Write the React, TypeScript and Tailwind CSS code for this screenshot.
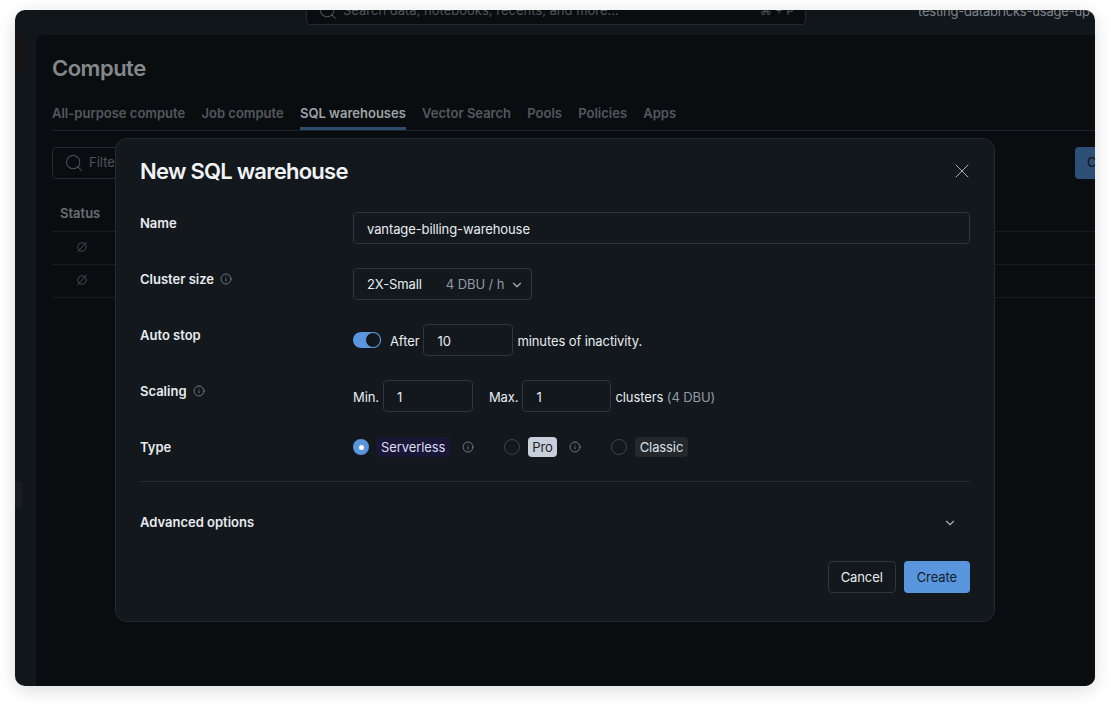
import { ChevronDown, Info, Search, X } from "lucide-react";

const tabs = ["All-purpose compute", "Job compute", "SQL warehouses", "Vector Search", "Pools", "Policies", "Apps"];

function StoppedIcon() {
  return (
    <svg width="12" height="12" viewBox="0 0 12 12" fill="none" stroke="#454a50" strokeWidth="1">
      <circle cx="6" cy="6" r="4.2" />
      <path d="M10.6 .8 1.4 11.2" />
    </svg>
  );
}

function Hint() {
  return <Info size={12} strokeWidth={1.5} className="text-[#8592a0]" />;
}

function Field({ value, width }: { value: string; width: string }) {
  return (
    <input
      readOnly
      value={value}
      className={`h-8 ${width} rounded border border-[#2c3540] bg-transparent px-[13px] pt-[2px] text-[13px] tracking-[-0.1px] text-[#e8ecf0] outline-none`}
    />
  );
}

function Row({ label, hint, children }: { label: string; hint?: boolean; children: React.ReactNode }) {
  return (
    <div className="flex h-8 items-start">
      <div className="flex w-[213px] shrink-0 items-center gap-[6px] pt-[1px] text-[13px] leading-5 font-semibold text-[#e8ecf0]">
        {label}
        {hint && <Hint />}
      </div>
      <div className="flex min-w-0 flex-1 items-center text-[13px] tracking-[-0.1px] text-[#e8ecf0]">{children}</div>
    </div>
  );
}

function Radio() {
  return <span className="h-4 w-4 shrink-0 rounded-full border border-[#39434e]" />;
}

export default function App() {
  return (
    <div className="h-[706px] w-[1110px] bg-white pt-[10px] pl-[15px] font-['Inter',sans-serif]">
      <div className="relative flex h-[676px] w-[1080px] flex-col overflow-hidden rounded-[10px] bg-[#11161a] shadow-[0_4px_18px_rgba(0,0,0,0.14)]">
        {/* Top bar, cut off by the window edge */}
        <div className="flex h-[25px] shrink-0 items-end pb-[10px]">
          <div className="ml-[291px] flex h-8 w-[500px] shrink-0 items-center gap-[5px] rounded-b border border-[#23292f] bg-[#0a0d10] px-[11px] pt-[3px] text-[13px] text-[#4e545a]">
            <Search size={20} strokeWidth={1.25} className="shrink-0" />
            <span className="flex-1 whitespace-nowrap">Search data, notebooks, recents, and more...</span>
            <span className="text-[12px] whitespace-nowrap">⌘ + P</span>
          </div>
          <div className="mb-[6px] ml-[112px] shrink-0 text-[13px] leading-4 tracking-[-0.2px] whitespace-nowrap text-[#7d8389]">testing-databricks-usage-up</div>
        </div>

        <div className="flex min-h-0 flex-1">
          {/* Collapsed nav */}
          <div className="flex w-[21px] shrink-0 flex-col">
            <div className="h-[38px] w-[6px] rounded-r bg-[#1a1214]" />
            <div className="mt-[408px] h-[27px] w-[7px] rounded-r bg-[#1a1e22]" />
          </div>

          {/* Compute page */}
          <div className="min-w-0 flex-1 rounded-tl-lg bg-[#0a0d10] pl-4">
            <h1 className="mt-[19px] text-[22px] leading-7 font-semibold tracking-[-0.5px] text-[#85888b]">Compute</h1>

            <div className="mt-[18px] flex h-[31px] gap-[16.25px] border-b border-[#1d2228] text-[13px] font-semibold text-[#53585e]">
              {tabs.map((tab) => (
                <div
                  key={tab}
                  className={
                    tab === "SQL warehouses"
                      ? "h-[30px] border-b-[3px] border-[#2e4c6e] pt-[3px] leading-5 text-[#9ea3a8]"
                      : "pt-[3px] leading-5"
                  }
                >
                  {tab}
                </div>
              ))}
            </div>

            <div className="mt-4 flex">
              <div className="flex h-8 w-[200px] items-center gap-[5px] rounded border border-[#23292f] px-[11px] text-[13px] text-[#4e545a]">
                <Search size={20} strokeWidth={1.25} />
                Filter
              </div>
              <div className="-mr-[60px] ml-auto flex h-8 w-20 shrink-0 items-center rounded bg-[#2d4f75] px-3 text-[13px] text-[#0c1117]">
                Create
              </div>
            </div>

            <div className="mt-[17px] flex h-9 items-center border-b border-[#181c21] pl-2 text-[13px] font-semibold text-[#6b7075]">Status</div>
            {[0, 1].map((i) => (
              <div key={i} className="flex h-[33px] items-center border-b border-[#181c21] pb-[2px] pl-6">
                <StoppedIcon />
              </div>
            ))}
          </div>
        </div>

        {/* Dialog */}
        <div className="absolute top-[128px] left-[100px] flex h-[484px] w-[880px] flex-col rounded-xl border border-[#232a31] bg-[#13181d] px-6 pt-[18px]">
          <div className="flex h-7 items-center justify-between">
            <h2 className="text-[22px] leading-7 font-semibold tracking-[-0.75px] text-[#f1f3f5]">New SQL warehouse</h2>
            <X size={24} strokeWidth={1} className="-mt-[1px] -mr-[4px] text-[#a5b0bb]" />
          </div>

          <div className="mt-[27px] flex flex-col gap-6">
            <Row label="Name">
              <Field value="vantage-billing-warehouse" width="w-full" />
            </Row>
            <Row label="Cluster size" hint>
              <div className="flex h-8 w-[179px] items-center rounded border border-[#2c3540] pt-[2px] pl-[13px] whitespace-nowrap">
                2X-Small
                <span className="ml-[24px] text-[#909ba6]">4 DBU / h</span>
                <ChevronDown size={14} className="ml-[6px] text-[#a5b0bb]" />
              </div>
            </Row>
            <Row label="Auto stop">
              <div className="relative h-4 w-7 shrink-0 rounded-full bg-[#5a96dd]">
                <span className="absolute top-0 right-0 h-4 w-4 rounded-full border-[1.5px] border-[#5a96dd] bg-[#13181d]" />
              </div>
              <span className="mr-[4px] ml-[9px] pt-[3px]">After</span>
              <Field value="10" width="w-[90px]" />
              <span className="ml-1 pt-[3px]">minutes of inactivity.</span>
            </Row>
            <Row label="Scaling" hint>
              <span className="mr-1 pt-[3px]">Min.</span>
              <Field value="1" width="w-[90px]" />
              <span className="mr-1 ml-4 pt-[3px]">Max.</span>
              <Field value="1" width="w-[89px]" />
              <span className="ml-1 pt-[3px]">
                clusters <span className="text-[#909ba6]">(4 DBU)</span>
              </span>
            </Row>
            <Row label="Type">
              <div className="mt-[1px] flex items-center">
                <span className="flex h-4 w-4 shrink-0 items-center justify-center rounded-full bg-[#5a96dd]">
                  <span className="h-[5px] w-[5px] rounded-full bg-white" />
                </span>
                <span className="ml-[7px] rounded bg-[#1a1736] px-[5px] leading-5 text-[#dcdcf2]">Serverless</span>
                <span className="mr-[30px] ml-3">
                  <Hint />
                </span>
                <Radio />
                <span className="ml-2 rounded bg-[#c7d0da] px-1 leading-5 text-[#1c2127]">Pro</span>
                <span className="mr-[30px] ml-3">
                  <Hint />
                </span>
                <Radio />
                <span className="ml-2 rounded bg-[#23282d] px-[5px] leading-5 text-[#dde1e5]">Classic</span>
              </div>
            </Row>
          </div>

          <div className="mt-[13px] border-t border-[#242b32]" />

          <div className="mt-[31px] flex h-5 items-center justify-between text-[13px] font-semibold text-[#e8ecf0]">
            Advanced options
            <ChevronDown size={14} className="mr-[13px] text-[#a5b0bb]" />
          </div>

          <div className="mt-[28px] flex justify-end gap-2">
            <button className="h-8 rounded border border-[#2c3540] px-3 pt-[2px] text-[13px] tracking-[-0.1px] text-[#e8ecf0]">Cancel</button>
            <button className="h-8 rounded bg-[#5a96dd] px-[13px] pt-[2px] text-[13px] tracking-[-0.1px] text-[#14202c]">Create</button>
          </div>
        </div>
      </div>
    </div>
  );
}
